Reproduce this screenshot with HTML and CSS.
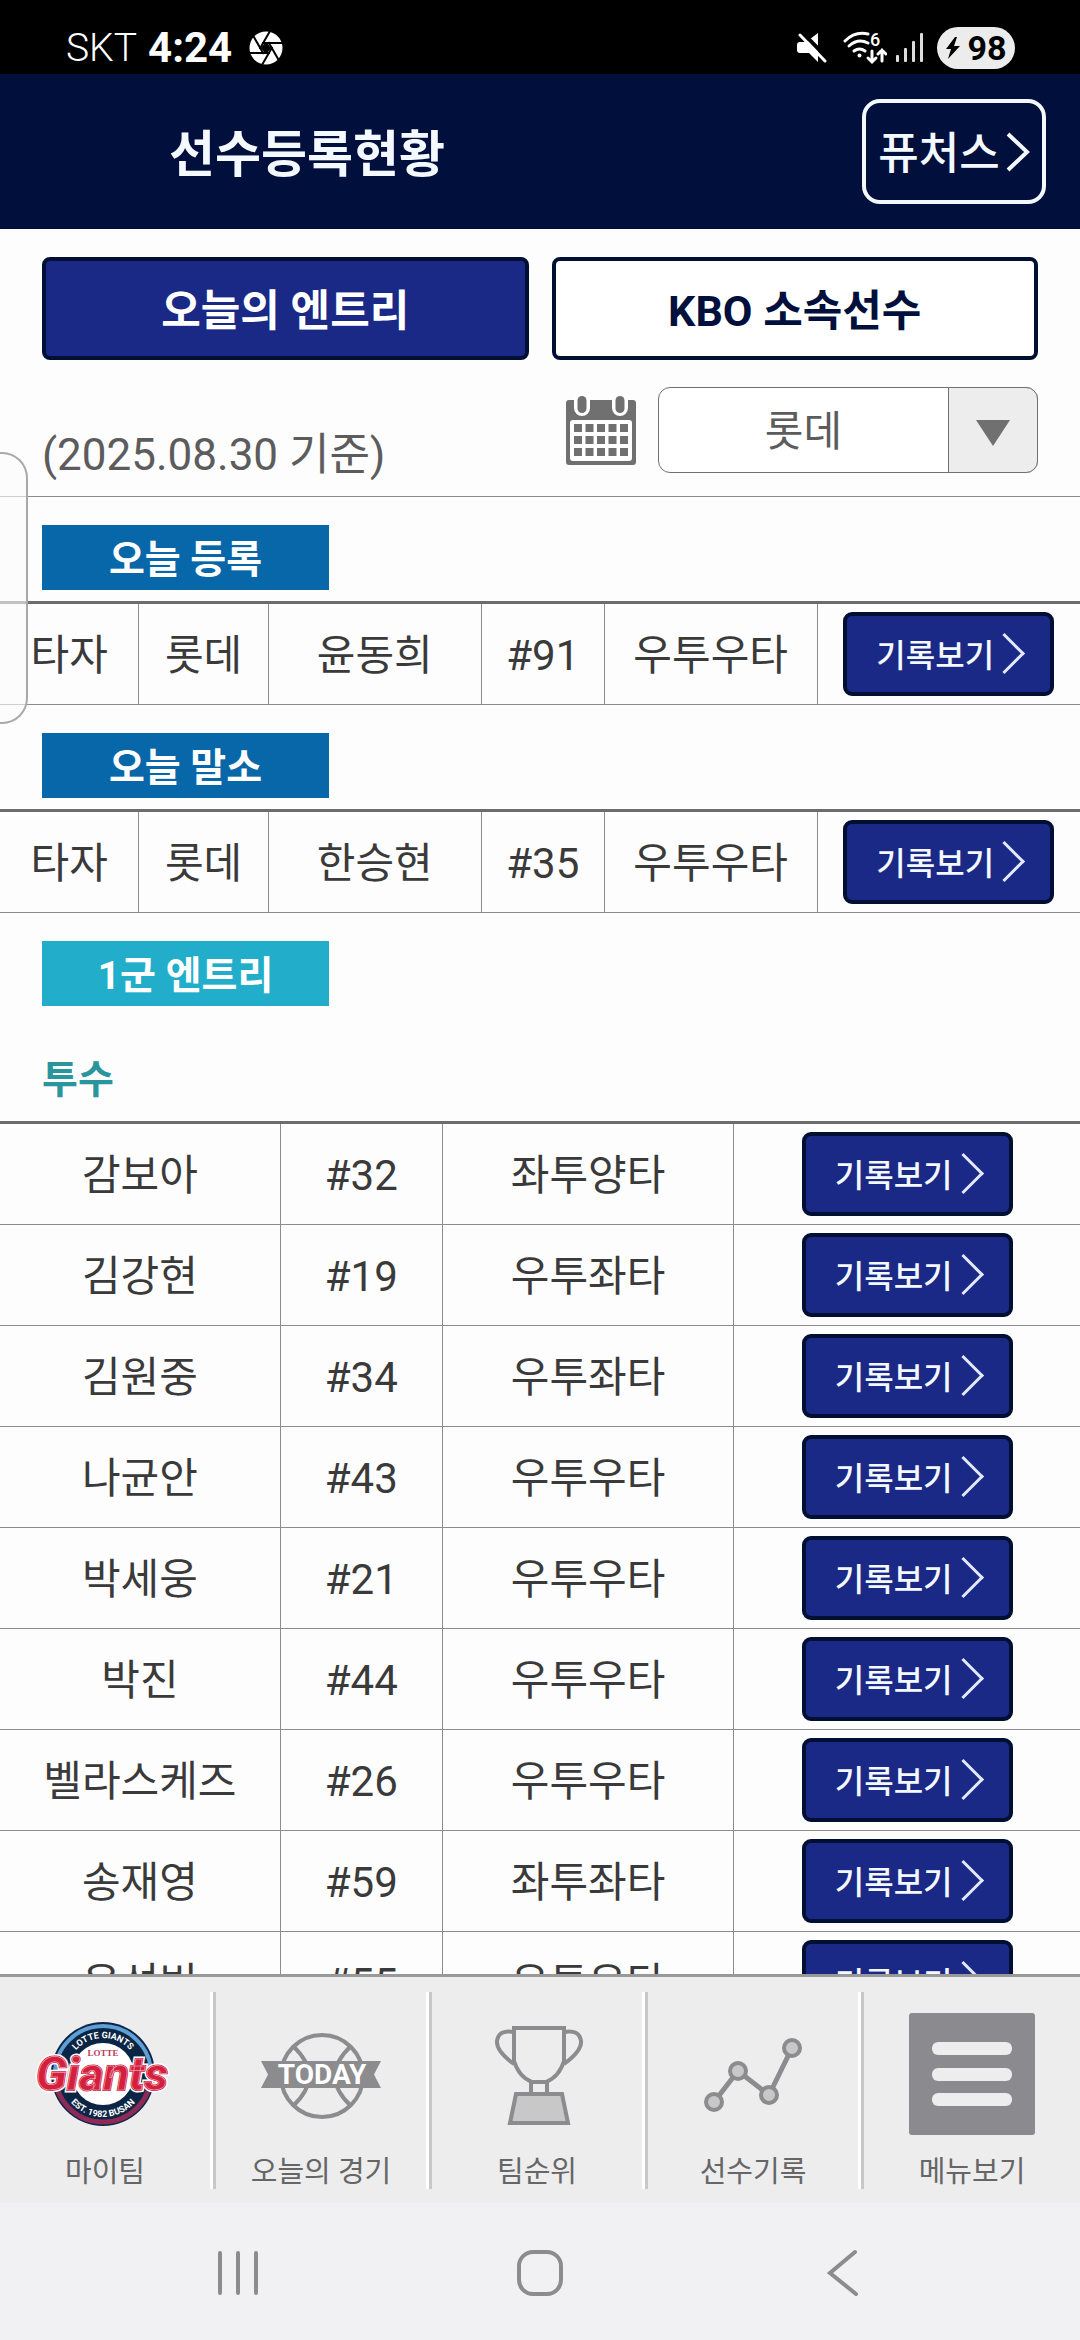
FILE: index.html
```
<!DOCTYPE html>
<html lang="ko">
<head>
    <meta charset="UTF-8">
    <meta name="viewport" content="width=device-width, initial-scale=1.0">
    <title>선수등록현황</title>
    <link rel="stylesheet" href="styles.css">
</head>
<body>
    <div class="status-bar">
        <div class="status-left">
            <span class="carrier">SKT</span>
            <span class="clock">4:24</span>
            <svg class="icon-shutter" width="34" height="34" viewBox="-17 -17 34 34">
                <circle r="16.5" fill="#fff"/>
                <g stroke="#000" stroke-width="2">
                    <path id="blade" d="M-4 -5H17"/>
                    <use href="#blade" transform="rotate(60)"/>
                    <use href="#blade" transform="rotate(120)"/>
                    <use href="#blade" transform="rotate(180)"/>
                    <use href="#blade" transform="rotate(240)"/>
                    <use href="#blade" transform="rotate(300)"/>
                </g>
                <path d="M-2 -4H2L5 0 2 4H-2L-5 0z" fill="#000"/>
            </svg>
        </div>
        <div class="status-right">
            <svg class="icon-mute" width="30" height="32" viewBox="0 0 30 32">
                <path d="M0 13q0-3 3-3h6L21 1v29l-9-9H3q-3 0-3-3z" fill="#fff"/>
                <path d="M4 -1L32 28" stroke="#000" stroke-width="4"/>
                <path d="M3 3L28 29" stroke="#fff" stroke-width="3" stroke-linecap="round"/>
            </svg>
            <svg class="icon-wifi" width="44" height="34" viewBox="0 0 44 34">
                <g fill="none" stroke="#fff" stroke-width="3" stroke-linecap="round">
                    <path d="M2 10Q12 0 25 3"/>
                    <path d="M6 15Q15 7 25 12"/>
                    <path d="M11 20q5.500-4 11 0"/>
                    <path d="M29 20v11M25 27l4 4 4-4"/>
                    <path d="M39 30V19M35 23l4-4 4 4"/>
                </g>
                <circle cx="16.500" cy="24.500" r="2" fill="#fff"/>
                <text class="wifi-gen" x="27" y="15">6</text>
            </svg>
            <svg class="icon-signal" width="28" height="30" viewBox="0 0 28 30" fill="#ddd">
                <rect x="0" y="22" width="3" height="7" rx="1"/>
                <rect x="8" y="15" width="3" height="14" rx="1"/>
                <rect x="16" y="8" width="3" height="21" rx="1"/>
                <rect x="24" y="0" width="3" height="29" rx="1"/>
            </svg>
            <span class="battery">
                <svg width="16" height="22" viewBox="0 0 16 22"><path d="M10 0L1 12h5L3 22 15 9H9l3-9z" fill="#000"/></svg>
                <span>98</span>
            </span>
        </div>
    </div>

    <header class="header">
        <h1>선수등록현황</h1>
        <button type="button" class="futures-btn">
            <span>퓨처스</span>
            <svg width="24" height="40" viewBox="0 0 24 40"><path d="M2 2l19 18L2 38" fill="none" stroke="#f4f8ff" stroke-width="4"/></svg>
        </button>
    </header>

    <main class="content">
        <div class="tabs">
            <button type="button" class="tab active">오늘의 엔트리</button>
            <button type="button" class="tab">KBO 소속선수</button>
        </div>

        <div class="toolbar">
            <span class="date">(2025.08.30 기준)</span>
            <button type="button" class="calendar-btn" aria-label="날짜 선택">
                <svg width="70" height="70" viewBox="0 0 70 70">
                    <path d="M0 8q0-3 3-3h64q3 0 3 3v59q0 3-3 3H3q-3 0-3-3z" fill="#707070"/>
                    <path d="M8 0v13a8 8 0 0 0 16 0V0zM46 0v13a8 8 0 0 0 16 0V0z" fill="#fff"/>
                    <rect x="11.500" y="1" width="9" height="17" rx="4.500" fill="#707070"/>
                    <rect x="49.500" y="1" width="9" height="17" rx="4.500" fill="#707070"/>
                    <rect x="4" y="25" width="62" height="41" rx="3" fill="#fff"/>
                    <path d="M8 33h8m3.500 0h8m3.500 0h8m3.500 0h8m3.500 0h8M8 45h8m3.500 0h8m3.500 0h8m3.500 0h8m3.500 0h8M8 57h8m3.500 0h8m3.500 0h8m3.500 0h8m3.500 0h8" stroke="#707070" stroke-width="8"/>
                </svg>
            </button>
            <div class="team-select">
                <select aria-label="구단">
                    <option selected>롯데</option>
                    <option>LG</option>
                    <option>한화</option>
                    <option>삼성</option>
                </select>
                <span class="arrow"><svg width="34" height="26" viewBox="0 0 34 26"><path d="M0 0h34L17 26z" fill="#707070"/></svg></span>
            </div>
        </div>

        <section>
            <h2 class="badge">오늘 등록</h2>
            <table class="entry">
                <tr>
                    <td class="w-pos">타자</td>
                    <td class="w-team">롯데</td>
                    <td class="w-name">윤동희</td>
                    <td class="w-no">#91</td>
                    <td class="w-hand">우투우타</td>
                    <td><button type="button" class="record-btn">기록보기</button></td>
                </tr>
            </table>
        </section>

        <section>
            <h2 class="badge">오늘 말소</h2>
            <table class="entry">
                <tr>
                    <td class="w-pos">타자</td>
                    <td class="w-team">롯데</td>
                    <td class="w-name">한승현</td>
                    <td class="w-no">#35</td>
                    <td class="w-hand">우투우타</td>
                    <td><button type="button" class="record-btn">기록보기</button></td>
                </tr>
            </table>
        </section>

        <section>
            <h2 class="badge first-team">1군 엔트리</h2>
            <h3 class="position">투수</h3>
            <table class="roster">
                <tr>
                    <td class="w-name">감보아</td><td class="w-no">#32</td><td class="w-hand">좌투양타</td>
                    <td><button type="button" class="record-btn">기록보기</button></td>
                </tr>
                <tr>
                    <td>김강현</td><td>#19</td><td>우투좌타</td>
                    <td><button type="button" class="record-btn">기록보기</button></td>
                </tr>
                <tr>
                    <td>김원중</td><td>#34</td><td>우투좌타</td>
                    <td><button type="button" class="record-btn">기록보기</button></td>
                </tr>
                <tr>
                    <td>나균안</td><td>#43</td><td>우투우타</td>
                    <td><button type="button" class="record-btn">기록보기</button></td>
                </tr>
                <tr>
                    <td>박세웅</td><td>#21</td><td>우투우타</td>
                    <td><button type="button" class="record-btn">기록보기</button></td>
                </tr>
                <tr>
                    <td>박진</td><td>#44</td><td>우투우타</td>
                    <td><button type="button" class="record-btn">기록보기</button></td>
                </tr>
                <tr>
                    <td>벨라스케즈</td><td>#26</td><td>우투우타</td>
                    <td><button type="button" class="record-btn">기록보기</button></td>
                </tr>
                <tr>
                    <td>송재영</td><td>#59</td><td>좌투좌타</td>
                    <td><button type="button" class="record-btn">기록보기</button></td>
                </tr>
                <tr>
                    <td>윤성빈</td><td>#55</td><td>우투우타</td>
                    <td><button type="button" class="record-btn">기록보기</button></td>
                </tr>
            </table>
        </section>
    </main>

    <nav class="tab-bar">
        <a href="#">
            <svg width="160" height="122" viewBox="0 0 160 122">
                <defs>
                    <path id="arcTop" d="M42 61a36 36 0 0 1 72 0"/>
                    <path id="arcBottom" d="M35 61a43 43 0 0 0 86 0"/>
                    <text id="giants" x="11" y="77" class="logo-giants">Giants</text>
                </defs>
                <circle cx="78" cy="61" r="52" fill="#0b2545"/>
                <path d="M30 61a48 48 0 0 1 96 0" fill="none" stroke="#5f9fd6" stroke-width="4"/>
                <path d="M30 61a48 48 0 0 0 96 0" fill="none" stroke="#8c2a58" stroke-width="5"/>
                <circle cx="78" cy="61" r="31" fill="#fff"/>
                <text class="logo-ring"><textPath href="#arcTop" startOffset="50%">LOTTE GIANTS</textPath></text>
                <text class="logo-ring"><textPath href="#arcBottom" startOffset="50%">EST. 1982 BUSAN</textPath></text>
                <text x="78" y="43" class="logo-lotte">LOTTE</text>
                <use href="#giants" fill="#fff" stroke="#fff" stroke-width="5"/>
                <use href="#giants" fill="#d3203f" stroke="#d3203f" stroke-width="2"/>
                <use href="#giants" fill="#d3203f" stroke="#f6c3cb" stroke-width="0.5"/>
            </svg>
            <span>마이팀</span>
        </a>
        <a href="#">
            <svg width="160" height="122" viewBox="0 0 160 122">
                <g fill="none" stroke="#8c8c8f" stroke-width="4">
                    <circle cx="81" cy="63" r="41"/>
                    <path d="M52 33Q84 63 52 93M110 33Q78 63 110 93"/>
                </g>
                <path d="M20 48h120l-7 13.500 7 13.500H20l7-13.500z" fill="#8c8c8f"/>
                <text x="81" y="71" class="logo-today">TODAY</text>
            </svg>
            <span>오늘의 경기</span>
        </a>
        <a href="#">
            <svg width="160" height="122" viewBox="0 0 160 122">
                <g fill="none" stroke="#8c8c8f" stroke-width="4">
                    <path d="M57 15h50v33q-5 16-18 21H75q-13-5-18-21z"/>
                    <path d="M57 19q-15-3-17 9-1 10 17 23M107 19q15-3 17 9 1 10-17 23"/>
                    <path d="M74 69v11M90 69v11"/>
                    <path d="M59 81h46l6 29H53z" fill="#c8c8c9"/>
                </g>
            </svg>
            <span>팀순위</span>
        </a>
        <a href="#">
            <svg width="160" height="122" viewBox="0 0 160 122">
                <path d="M41 89l24-31 31 24 23-47" fill="none" stroke="#8c8c8f" stroke-width="5"/>
                <g fill="#c8c8c9" stroke="#8c8c8f" stroke-width="4">
                    <circle cx="41" cy="89" r="8"/>
                    <circle cx="65" cy="58" r="8"/>
                    <circle cx="96" cy="82" r="8"/>
                    <circle cx="119" cy="35" r="8"/>
                </g>
            </svg>
            <span>선수기록</span>
        </a>
        <a href="#">
            <svg width="160" height="122" viewBox="0 0 160 122">
                <rect x="17" y="0" width="126" height="122" rx="3" fill="#8a8a8f"/>
                <g fill="#ededee">
                    <rect x="40" y="29" width="80" height="13" rx="6"/>
                    <rect x="40" y="55" width="80" height="13" rx="6"/>
                    <rect x="40" y="80" width="80" height="13" rx="6"/>
                </g>
            </svg>
            <span>메뉴보기</span>
        </a>
    </nav>

    <div class="system-nav">
        <button type="button" aria-label="최근 앱">
            <svg width="48" height="48" viewBox="0 0 48 48"><path d="M6 5v40M24 5v40M42 5v40" stroke="#8c8c8e" stroke-width="4" stroke-linecap="round"/></svg>
        </button>
        <button type="button" aria-label="홈">
            <svg width="48" height="48" viewBox="0 0 48 48"><rect x="3" y="4" width="42" height="42" rx="14" fill="none" stroke="#8c8c8e" stroke-width="4"/></svg>
        </button>
        <button type="button" aria-label="뒤로">
            <svg width="48" height="48" viewBox="0 0 48 48"><path d="M37 4L12 25l26 21" fill="none" stroke="#8c8c8e" stroke-width="4" stroke-linecap="round"/></svg>
        </button>
    </div>

    <div class="edge-handle"></div>
</body>
</html>
```

FILE: styles.css
```
* {
    box-sizing: border-box;
}

body {
    display: flex;
    flex-direction: column;
    position: relative;
    margin: 0;
    height: 100vh;
    overflow: hidden;
    font-family: Roboto, "Noto Sans CJK KR", sans-serif;
    font-size: 42px;
    color: #3a3a3a;
    background-color: #fdfdfd;
}

button,
select {
    font-family: inherit;
    cursor: pointer;
}

svg {
    display: block;
    flex-shrink: 0;
}

/* status bar */
.status-bar {
    display: flex;
    justify-content: space-between;
    align-items: center;
    height: 74px;
    padding: 22px 65px 0 66px;
    color: #fff;
    background-color: #000;
    font-size: 39px;
    line-height: 48px;
}

.status-left,
.status-right {
    display: flex;
    align-items: center;
    height: 52px;
}

.carrier {
    font-weight: 300;
}

.clock {
    margin-left: 11px;
    font-size: 42px;
    font-weight: 700;
}

.icon-shutter {
    margin-left: 17px;
}

.icon-mute {
    margin-right: 16px;
}

.icon-wifi {
    margin-right: 9px;
}

.icon-signal {
    margin-right: 13px;
}

.wifi-gen {
    font-size: 18px;
    font-weight: 500;
    fill: #fff;
}

.battery {
    display: flex;
    justify-content: center;
    align-items: center;
    gap: 6px;
    width: 78px;
    height: 42px;
    border-radius: 21px;
    color: #000;
    background-color: #ececec;
    font-size: 34px;
    font-weight: 700;
}

/* header */
.header {
    display: flex;
    justify-content: space-between;
    align-items: center;
    height: 155px;
    padding: 0 34px 0 169px;
    color: #f4f8ff;
    background-color: #000f3c;
}

.header h1 {
    margin: 0;
    padding-bottom: 4px;
    font-size: 50px;
    font-weight: 700;
}

.futures-btn {
    display: flex;
    justify-content: center;
    align-items: center;
    gap: 6px;
    width: 184px;
    height: 105px;
    padding: 0;
    border: 4px solid #f4f8ff;
    border-radius: 18px;
    color: #f4f8ff;
    background: none;
    font-size: 44px;
    font-weight: 500;
}

.futures-btn span {
    padding-bottom: 4px;
}

/* content */
.content {
    flex: 1;
    min-height: 0;
    overflow-y: auto;
    scrollbar-width: none;
}

.tabs {
    display: flex;
    gap: 23px;
    padding: 28px 42px 0;
}

.tab {
    flex: 1;
    height: 103px;
    padding: 0 0 4px;
    border: 4px solid #000f32;
    border-radius: 8px;
    color: #000f3c;
    background-color: #fff;
    font-size: 43px;
    font-weight: 700;
}

.tab.active {
    color: #fff;
    background-color: #1a2985;
}

.toolbar {
    display: flex;
    align-items: center;
    padding: 27px 42px 23px;
    border-bottom: 1px solid #8c8c8c;
    color: #5c5c5c;
}

.date {
    align-self: flex-end;
    margin-right: auto;
    font-size: 44px;
    line-height: 36px;
}

.calendar-btn {
    margin-right: 22px;
    padding: 0;
    border: none;
    background: none;
}

.team-select {
    position: relative;
    width: 380px;
    height: 86px;
}

.team-select select {
    width: 100%;
    height: 100%;
    padding: 3px 89px 0 0;
    border: 1px solid #707070;
    border-radius: 12px;
    appearance: none;
    color: #5c5c5c;
    background-color: #fff;
    font-size: 42px;
    text-align: center;
    text-align-last: center;
}

.team-select .arrow {
    display: flex;
    justify-content: center;
    align-items: center;
    position: absolute;
    top: 0;
    right: 0;
    width: 90px;
    height: 100%;
    padding-top: 6px;
    border: 1px solid #707070;
    border-radius: 0 12px 12px 0;
    background-color: #ededed;
    pointer-events: none;
}

section {
    padding-top: 28px;
}

.badge {
    width: 287px;
    margin: 0 0 11px 42px;
    padding-top: 6px;
    color: #fff;
    background-color: #0867a9;
    font-size: 39px;
    font-weight: 700;
    line-height: 59px;
    text-align: center;
}

.badge.first-team {
    background-color: #22aeca;
}

.position {
    margin: 0 0 11px 42px;
    padding-top: 34px;
    color: #2b959e;
    font-size: 39px;
    font-weight: 700;
    line-height: 59px;
}

table {
    width: 100%;
    table-layout: fixed;
    border-spacing: 0;
    border-top: 3px solid #6d6d6d;
}

td {
    height: 101px;
    padding: 3px 0 0;
    border-bottom: 1px solid #8c8c8c;
    border-right: 1px solid #8c8c8c;
    line-height: 50px;
    text-align: center;
}

td:last-child {
    padding-top: 0;
    border-right: none;
}

.entry .w-pos { width: 12.9%; }
.entry .w-team { width: 12%; }
.entry .w-name { width: 19.7%; }
.entry .w-no { width: 11.4%; }
.entry .w-hand { width: 19.7%; }

.roster .w-name { width: 26%; }
.roster .w-no { width: 15%; }
.roster .w-hand { width: 27%; }

.record-btn {
    display: flex;
    justify-content: center;
    align-items: center;
    width: 211px;
    height: 84px;
    margin: 0 auto;
    padding: 0 2px 2px 0;
    border: 4px solid #000f32;
    border-radius: 9px;
    color: #f4f8ff;
    background-color: #1a2985;
    font-size: 32px;
    font-weight: 500;
}

/* chevron */
.record-btn::after {
    content: "";
    width: 26px;
    height: 26px;
    margin-left: -4px;
    border-top: 3px solid #e4e9ff;
    border-right: 3px solid #e4e9ff;
    transform: rotate(45deg);
}

/* bottom tabs */
.tab-bar {
    display: flex;
    padding: 15px 0 14px;
    border-top: 3px solid #999;
    background-color: #ededed;
}

.tab-bar a {
    display: flex;
    flex-direction: column;
    align-items: center;
    gap: 20px;
    width: 20%;
    height: 197px;
    padding: 21px 3px 0 0;
    border-right: 3px solid #c8c8c8;
    box-shadow: inset -3px 0 #fff;
    color: #666;
    font-size: 29px;
    line-height: 34px;
    text-decoration: none;
}

.tab-bar a:last-child {
    padding-right: 0;
    border-right: none;
    box-shadow: none;
}

.logo-giants {
    font-size: 47px;
    font-weight: 700;
    font-style: italic;
}

.logo-ring {
    font-size: 9px;
    font-weight: 700;
    fill: #fff;
    text-anchor: middle;
}

.logo-lotte {
    font-family: "Liberation Serif", serif;
    font-size: 9px;
    font-weight: 700;
    fill: #b8405a;
    text-anchor: middle;
}

.logo-today {
    font-size: 28px;
    font-weight: 700;
    fill: #fff;
    text-anchor: middle;
}

.system-nav {
    display: flex;
    height: 137px;
    padding: 0 8%;
    background-color: #f1f1f3;
}

.system-nav button {
    display: flex;
    flex: 1;
    justify-content: center;
    align-items: center;
    border: none;
    background: none;
}

/* edge panel handle, sits over the page */
.edge-handle {
    position: absolute;
    top: 452px;
    left: 0;
    width: 28px;
    height: 272px;
    border: 2px solid #a8a8a8;
    border-left: none;
    border-radius: 0 26px 26px 0;
    background-color: rgba(252, 252, 252, 0.6);
}
```
